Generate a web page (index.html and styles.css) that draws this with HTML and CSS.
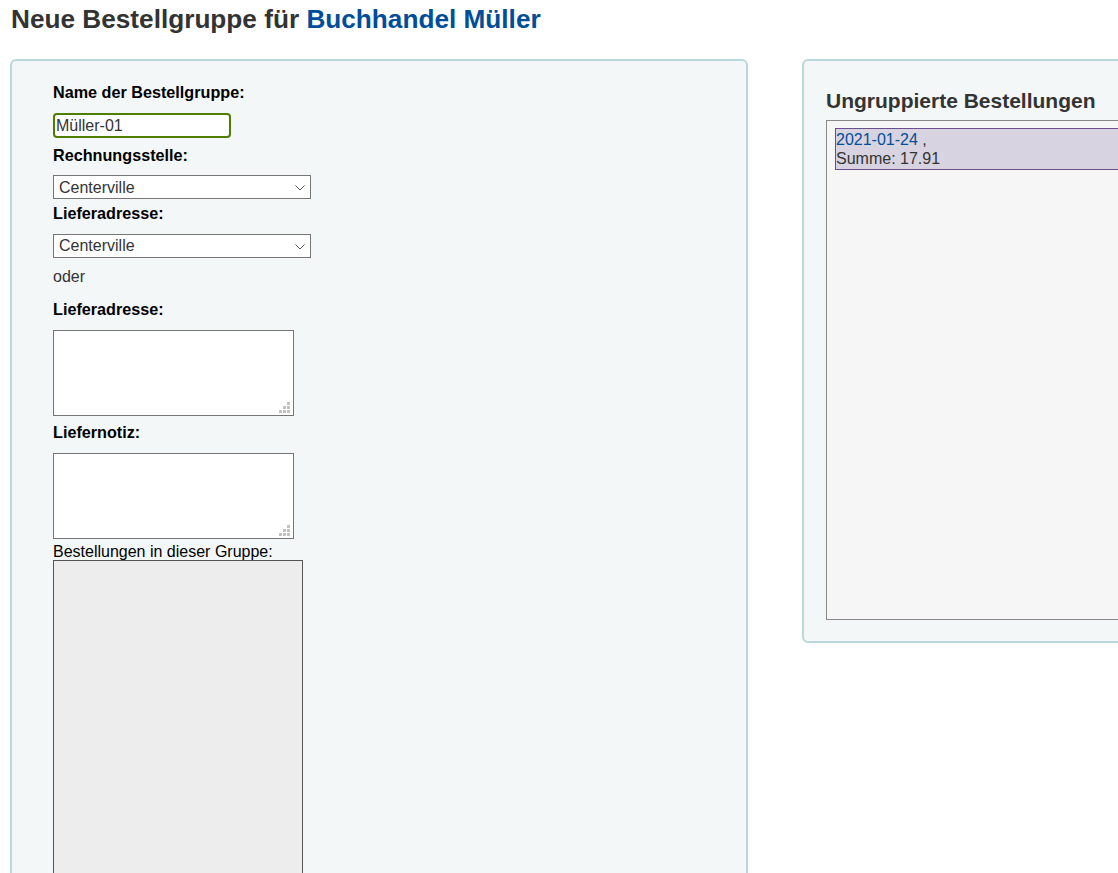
FILE: index.html
```html
<!DOCTYPE html>
<html lang="de">
<head>
<meta charset="utf-8">
<title>Neue Bestellgruppe</title>
<link rel="stylesheet" href="styles.css">
</head>
<body>
<h1 class="page-title">Neue Bestellgruppe für <a class="title-link" href="#">Buchhandel Müller</a></h1>
<div class="layout">
  <form class="panel panel-left">
    <label class="lbl lbl-first" for="name">Name der Bestellgruppe:</label>
    <input class="name-input" id="name" type="text" value="Müller-01">
    <label class="lbl lbl-after-input" for="billing">Rechnungsstelle:</label>
    <span class="sel-wrap">
      <select class="sel" id="billing"><option>Centerville</option></select>
      <svg class="chevron" width="10" height="6" viewBox="0 0 10 6"><path d="M0.5 0.5 L5 5 L9.5 0.5" fill="none" stroke="#555" stroke-width="1"/></svg>
    </span>
    <label class="lbl lbl-after-select" for="delivery">Lieferadresse:</label>
    <span class="sel-wrap">
      <select class="sel" id="delivery"><option>Centerville</option></select>
      <svg class="chevron" width="10" height="6" viewBox="0 0 10 6"><path d="M0.5 0.5 L5 5 L9.5 0.5" fill="none" stroke="#555" stroke-width="1"/></svg>
    </span>
    <p class="oder">oder</p>
    <label class="lbl lbl-after-oder" for="freedel">Lieferadresse:</label>
    <span class="area-wrap">
      <textarea class="area" id="freedel"></textarea>
      <svg class="grip" width="11" height="11" viewBox="0 0 11 11"><g fill="#c2c2c2"><rect x="8" y="0" width="3" height="3"/><rect x="4" y="4" width="3" height="3"/><rect x="8" y="4" width="3" height="3"/><rect x="0" y="8" width="3" height="3"/><rect x="4" y="8" width="3" height="3"/><rect x="8" y="8" width="3" height="3"/></g></svg>
    </span>
    <label class="lbl lbl-after-area" for="note">Liefernotiz:</label>
    <span class="area-wrap">
      <textarea class="area" id="note"></textarea>
      <svg class="grip" width="11" height="11" viewBox="0 0 11 11"><g fill="#c2c2c2"><rect x="8" y="0" width="3" height="3"/><rect x="4" y="4" width="3" height="3"/><rect x="8" y="4" width="3" height="3"/><rect x="0" y="8" width="3" height="3"/><rect x="4" y="8" width="3" height="3"/><rect x="8" y="8" width="3" height="3"/></g></svg>
    </span>
    <div class="group-caption">Bestellungen in dieser Gruppe:</div>
    <div class="group-box"></div>
  </form>
  <div class="panel panel-right">
    <h3 class="ungrouped-title">Ungruppierte Bestellungen</h3>
    <div class="orders-box">
      <div class="order-item">
        <a class="order-link" href="#">2021-01-24</a> ,<br>
        Summe: 17.91
      </div>
    </div>
  </div>
</div>
</body>
</html>
```
FILE: styles.css
```css
html, body {
  overflow: hidden;
}
body {
  margin: 0;
  padding: 0 0 0 10px;
  background: #fff;
  color: #333;
  font-family: "Liberation Sans", Arial, sans-serif;
  font-size: 16px;
}
.page-title {
  margin: 4px 0 0 1px;
  font-size: 26.2px;
  font-weight: bold;
  line-height: 30px;
  color: #333;
}
.title-link {
  color: #004d99;
  text-decoration: none;
}
.layout {
  display: flex;
  align-items: flex-start;
  gap: 54px;
  margin-top: 25px;
}
.panel {
  flex-shrink: 0;
  box-sizing: border-box;
  background: #f3f7f8;
  border: 2px solid #b9d8dc;
  border-radius: 6px;
}
.panel-left {
  width: 738px;
  padding: 22px 0 60px 41px;
  display: flex;
  flex-direction: column;
  align-items: flex-start;
}
.lbl {
  display: block;
  font-weight: bold;
  font-size: 16.2px;
  color: #000;
  line-height: 18px;
  padding-top: 1px;
  margin-bottom: 12px;
}
.lbl-first { padding-top: 0; margin-bottom: 12px; }
.lbl-after-input { margin-top: 6.5px; margin-bottom: 11.5px; }
.lbl-after-select { margin-top: 3.7px; margin-bottom: 12.3px; }
.lbl-after-oder { margin-top: 12.5px; margin-bottom: 12px; }
.lbl-after-area { margin-top: 6px; margin-bottom: 12px; }
.name-input {
  box-sizing: border-box;
  width: 178px;
  height: 25px;
  margin: 0;
  padding: 0 1px;
  border: 2px solid #4f7d00;
  border-radius: 4px;
  background: #fff;
  font-family: "Liberation Sans", Arial, sans-serif;
  font-size: 16px;
  color: #333;
  outline: none;
}
.sel-wrap {
  position: relative;
  display: block;
  width: 258px;
  height: 24px;
}
.sel {
  -webkit-appearance: none;
  appearance: none;
  box-sizing: border-box;
  display: block;
  width: 258px;
  height: 24px;
  margin: 0;
  padding: 0 0 0 5px;
  border: 1px solid #767676;
  border-radius: 0;
  background-color: #fff;
  font-family: "Liberation Sans", Arial, sans-serif;
  font-size: 16px;
  color: #333;
}
.chevron {
  position: absolute;
  right: 6px;
  top: 10px;
  pointer-events: none;
}
.oder {
  margin: 10.5px 0 0;
  line-height: 18px;
  color: #333;
}
.area-wrap {
  position: relative;
  display: block;
  width: 241px;
  height: 86px;
}
.area {
  box-sizing: border-box;
  display: block;
  width: 241px;
  height: 86px;
  margin: 0;
  border: 1px solid #767676;
  border-radius: 0;
  background: #fff;
  font-family: "Liberation Sans", Arial, sans-serif;
  font-size: 16px;
  resize: none;
}
.grip {
  position: absolute;
  right: 4px;
  bottom: 3px;
  pointer-events: none;
}
.group-caption {
  margin-top: 5px;
  line-height: 16px;
  color: #000;
}
.group-box {
  box-sizing: border-box;
  width: 250px;
  height: 420px;
  background: #ededed;
  border: 1px solid #555;
}
.panel-right {
  width: 420px;
  padding: 0 0 21px 22px;
}
.ungrouped-title {
  margin: 28px 0 7px;
  font-size: 21px;
  line-height: 24px;
  font-weight: bold;
  color: #333;
}
.orders-box {
  box-sizing: border-box;
  height: 500px;
  background: #f6f6f6;
  border: 1px solid #888;
  padding: 7px 0 0 8px;
}
.order-item {
  background: #d8d3e0;
  border: 1px solid #6b4e8c;
  padding: 1px 0;
  line-height: 19px;
  color: #333;
}
.order-link {
  color: #004d99;
  text-decoration: none;
}
```
